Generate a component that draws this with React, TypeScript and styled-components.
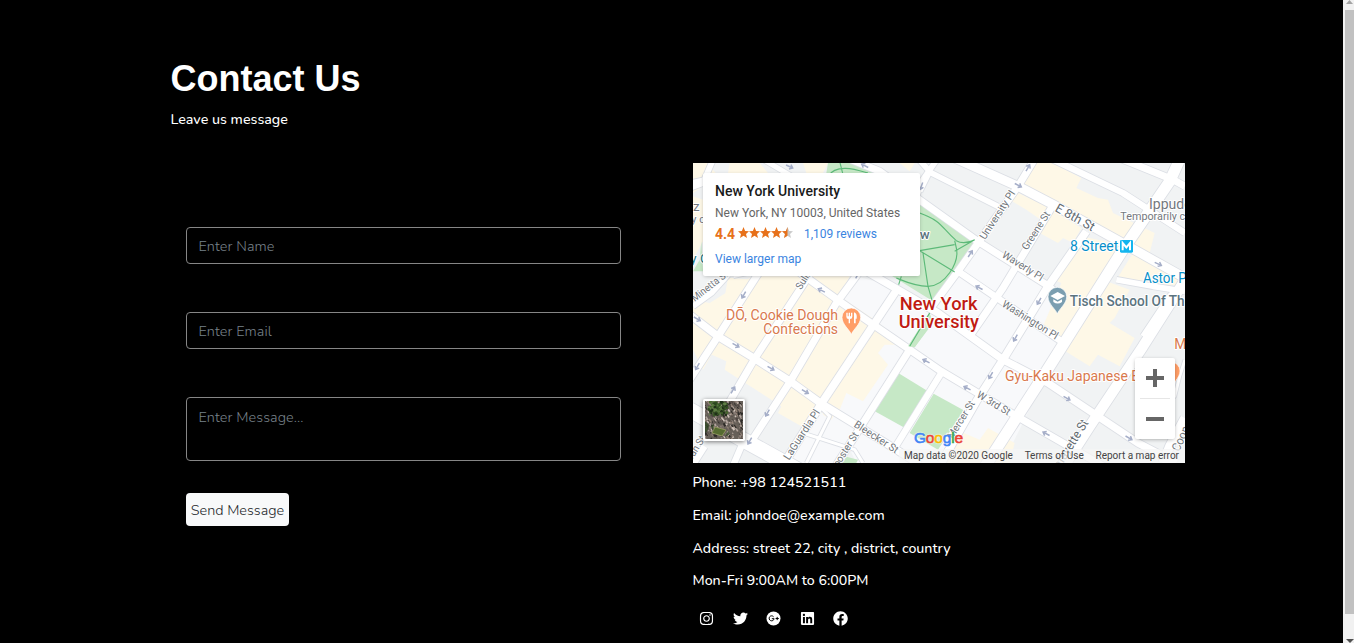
import React from "react";
import styled, { createGlobalStyle } from "styled-components";
import { FaInstagram, FaTwitter, FaLinkedin, FaFacebook } from "react-icons/fa";

const Global = createGlobalStyle`
  * { box-sizing: border-box; }
  html, body { margin: 0; background: #000; overflow: hidden; }
  body { font-family: Nunito, Lato, sans-serif; color: #fff; }
`;

const Page = styled.div`
  display: flex;
  height: 643px;
  background: #000;
`;

const Main = styled.main`
  flex: 1;
  padding: 57px 158px 0 170px;
`;

const Title = styled.h1`
  margin: 0;
  padding-left: 0.5px;
  font: bold 36px/43px "Liberation Sans", Arial, sans-serif;
`;

const Subtitle = styled.p`
  margin: 9px 0 0;
  padding-left: 0.5px;
  font-size: 14.25px;
  font-weight: 500;
  line-height: 22px;
`;

const Columns = styled.div`
  display: grid;
  grid-template-columns: 451px 492px;
  column-gap: 72px;
  margin-top: 32px;
`;

const Form = styled.form`
  display: flex;
  flex-direction: column;
  align-items: flex-start;
  padding: 64px 0 0 16px;
`;

const fieldStyles = `
  display: block;
  width: 435px;
  margin: 0 0 48px;
  padding: 6px 11.5px;
  border: 1px solid #868686;
  border-radius: 4px;
  background: transparent;
  color: #fff;
  font: 300 14.4px/22px Nunito, Lato, sans-serif;
  letter-spacing: 0.08px;
  outline: none;
  resize: none;
  &::placeholder { color: #78828a; opacity: 1; }
`;

const Input = styled.input`
  ${fieldStyles}
  height: 37px;
`;

const Message = styled.textarea`
  ${fieldStyles}
  height: 64px;
  margin-bottom: 32px;
  padding-top: 8px;
  overflow: hidden;
`;

const Send = styled.button`
  width: 103px;
  height: 33px;
  padding: 0;
  border: 0;
  border-radius: 4px;
  background: #f8f9fa;
  color: #212529;
  font: 350 14.4px/22px Nunito, Lato, sans-serif;
  white-space: nowrap;
`;

const MapFrame = styled.div`
  position: relative;
  width: 492px;
  height: 300px;
  overflow: hidden;
  font-family: Roboto, sans-serif;
`;

const MapCanvas = styled.svg`
  display: block;
  width: 492px;
  height: 300px;
`;

const PlaceCard = styled.div`
  position: absolute;
  left: 10px;
  top: 10px;
  width: 217px;
  height: 103px;
  padding: 9px 12px;
  border-radius: 2px;
  background: #fff;
  box-shadow: 0 1px 4px -1px rgba(0, 0, 0, 0.3);
  font-size: 12px;
  color: #666;
  white-space: nowrap;
`;

const PlaceName = styled.div`
  color: #1a1a1a;
  font-size: 14px;
  font-weight: 500;
  line-height: 18px;
`;

const PlaceAddress = styled.div`
  margin-top: 5px;
  line-height: 16px;
`;

const Rating = styled.div`
  display: flex;
  align-items: center;
  height: 16px;
  margin-top: 5px;
  color: #3a84df;
`;

const Score = styled.span`
  width: 23px;
  margin-top: -1px;
  color: #e7711b;
  font-size: 14px;
  font-weight: 700;
`;

const Stars = styled.svg`
  width: 55px;
  height: 12px;
  margin: -2px 11px 0 0;
`;

const LargerMap = styled.div`
  margin-top: 9px;
  line-height: 16px;
  color: #3a84df;
`;

const Thumb = styled.svg`
  position: absolute;
  left: 10px;
  top: 236px;
  width: 42px;
  height: 42px;
  border: 2px solid #fff;
  border-radius: 2px;
  box-shadow: 0 1px 4px rgba(0, 0, 0, 0.5);
`;

const Zoom = styled.div`
  position: absolute;
  left: 442px;
  top: 195px;
  width: 40px;
  height: 81px;
  border-radius: 2px;
  background: #fff;
  box-shadow: 0 1px 4px -1px rgba(0, 0, 0, 0.4);
`;

const ZoomGlyph = styled.svg`
  display: block;
`;

const Google = styled.div`
  display: flex;
  position: absolute;
  left: 221px;
  top: 265px;
  font: 500 15.5px/20px "Liberation Sans", sans-serif;
  letter-spacing: -0.2px;
  -webkit-text-stroke: 0.6px;
  text-shadow: 0 0 2px #fff, 0 0 2px #fff;
`;

const Letter = styled.span<{ $c: string }>`
  color: ${(p) => p.$c};
`;

const Legal = styled.div`
  position: absolute;
  right: 0;
  bottom: 0;
  display: flex;
  justify-content: space-between;
  width: 286px;
  height: 14px;
  padding: 0 6px 0 5px;
  background: rgba(245, 245, 245, 0.72);
  color: #444;
  font-size: 10px;
  line-height: 14px;
  white-space: nowrap;
`;

const Details = styled.div`
  display: flex;
  flex-direction: column;
  margin-left: -0.5px;
  padding-top: 9px;
`;

const Detail = styled.p`
  margin: 0 0 10.8px;
  font-size: 14.2px;
  font-weight: 500;
  line-height: 22px;
  white-space: nowrap;
`;

const Social = styled.div`
  display: flex;
  gap: 18.5px;
  margin-top: 8px;
  padding-left: 6.5px;
  font-size: 15px;
`;

const ScrollTrack = styled.div`
  display: flex;
  flex-direction: column;
  justify-content: space-between;
  width: 11px;
  background: #f1f1f1;
`;

const ScrollArrow = styled.svg`
  display: block;
  width: 11px;
  height: 10px;
`;

const ScrollThumb = styled.div`
  width: 9px;
  height: 604px;
  margin: 0 0 auto 2px;
  background: #c1c1c1;
`;

/* Map geometry is expressed at three units per pixel. */
const yellow = [
  "60,340 160,350 200,340 470,340 440,400 545,470 640,545 530,480 380,400",
  "105,345 185,350 30,620 0,560 0,470 75,515",
  "170,345 450,360 425,425 540,490 385,710 0,480 0,410 50,420",
  "0,545 75,520 385,715 350,775 325,790 255,750 265,730 95,620 100,595 0,550",
  "545,480 640,545 575,545 555,570 585,605 510,715 460,690 440,740 395,715",
  "1020,0 1080,0 1165,45 1150,75 1215,105 1245,110 1260,150 1385,210 1370,270 1310,250 1080,130 975,70",
  "955,80 1060,130 1165,195 1140,240 1110,225 1095,240 1040,210 1050,175 1000,140 950,110",
  "1165,220 1305,250 1110,535 1085,520 1050,490 1105,360 1080,350",
  "1240,355 1310,380 1265,465 1250,480 1325,525 1280,610 1215,575 1190,610 1110,560",
  "1320,270 1476,350 1476,370 1270,350",
  "0,0 45,0 75,40 0,90", "110,0 200,0 225,30 100,60", "330,0 405,0 390,30 340,30", "620,0 665,0 650,25",
  "0,100 30,110 30,235 0,290", "790,800 860,830 885,795 965,840 950,900 760,900",
  "385,735 435,740 415,770 390,755",
];

const campus = [
  "850,240 1055,365 1105,545 930,900 490,900 400,710 545,480 620,385 700,410",
  "490,340 620,375 550,480 430,410",
  "480,730 650,560 930,590 860,760 760,880 500,800",
  "385,740 490,790 440,900 280,900",
];

const parks = [
  "405,0 520,0 850,230 720,415 485,270 400,30",
  "612,628 705,685 640,797 540,742",
  "722,692 812,742 735,860 650,810",
  "645,550 710,450 720,480 665,553",
  "455,880 495,890 490,900 440,900",
  "25,235 30,325 0,325 20,290",
];

const roads: [string, number][] = [
  ["195,-20 330,60", 16],
  ["475,-10 560,25 850,232 1060,365 1110,405", 22],
  ["705,25 935,140", 18],
  ["665,-25 710,25 680,85", 18],
  ["745,-30 690,50 670,100", 18],
  ["785,-15 975,70 1090,130 1315,255 1476,345", 28],
  ["1060,-20 1290,90 1476,210", 20],
  ["1230,-35 1440,50 1476,70", 22],
  ["1030,-20 975,70 795,325 710,440", 22],
  ["1075,135 930,375 830,520", 22],
  ["1180,205 1065,370 930,590 850,715 745,900", 24],
  ["1270,350 1380,370 1476,385", 18],
  ["1476,355 1430,400 1350,520", 18],
  ["1460,-10 1430,55 1290,260 1060,625 870,920", 34],
  ["1480,345 1350,550 1190,790 1100,930", 32],
  ["1476,765 1430,850 1410,900", 28],
  ["1476,590 1460,640 1445,700 1410,725", 10],
  ["60,-10 30,60 -10,75", 18],
  ["-10,60 45,48", 16],
  ["120,335 280,300 440,415 545,488 650,560 745,625 980,765 1240,915", 22],
  ["485,305 615,380 735,450 930,590 1065,660 1200,750 1335,840 1450,900", 23],
  ["795,325 905,400 1105,535", 21],
  ["-10,455 75,520 185,587 292,655 385,722 610,860 680,905", 23],
  ["200,325 75,520 -10,650", 22],
  ["350,335 185,587 90,750", 22],
  ["500,325 430,420 292,655 165,850", 22],
  ["615,375 540,488 385,722 255,930", 24],
  ["650,560 485,820 415,930", 22],
  ["745,630 605,855", 20],
  ["-10,740 150,830 340,935", 46],
  ["145,850 115,920", 20],
  ["35,850 -10,920", 20],
  ["0,430 55,390 105,335", 18],
  ["385,735 410,760 340,900", 10],
  ["330,810 485,860 510,900", 10],
];

const paths = [
  "M440 -5 L450 35 M405 40 C430 0 490 20 525 30",
  "M680 150 C750 175 745 195 790 233 Q812 246 845 230 M845 230 L785 265",
  "M680 263 L785 245 M680 263 L785 327 M690 270 L705 370",
  "M785 233 L790 255 C800 300 755 370 705 370 C665 370 635 355 610 345",
  "M705 370 L718 415 M710 450 L650 550 M625 340 L617 365",
];

type LabelSpec = [string, number, number, number, number, number, string];
const streetLabels: LabelSpec[] = [
  ["University Pl", 876, 232, -57, 31, 168, "#70757a"],
  ["Greene St", 1002, 263, -57, 31, 130, "#70757a"],
  ["E 8th St", 1084, 143, 29, 38, 129, "#616a70"],
  ["Waverly Pl", 925, 281, 32, 32, 139, "#70757a"],
  ["Washington Pl", 925, 429, 32, 32, 191, "#70757a"],
  ["W 3rd St", 849, 701, 31, 32, 111, "#70757a"],
  ["Mercer St", 779, 829, -58, 31, 127, "#70757a"],
  ["Bleecker St", 481, 790, 33, 32, 151, "#70757a"],
  ["LaGuardia Pl", 288, 893, -57, 32, 173, "#70757a"],
  ["Wooster St", 423, 935, -58, 31, 141, "#70757a"],
  ["Sullivan St", 324, 382, -58, 31, 132, "#70757a"],
  ["Minetta St", 5, 417, -38, 31, 130, "#70757a"],
  ["Sullivan St", -32, 939, -58, 31, 132, "#70757a"],
  ["Lafayette St", 1091, 934, -58, 38, 182, "#616a70"],
  ["Cooper Sq", 1458, 868, -65, 37, 156, "#70757a"],
];

const arrows: [number, number, number][] = [
  [290, 11, 25], [515, 8, 207], [685, 70, 110], [976, 67, 27], [1005, 14, -60],
  [832, 272, -57], [858, 374, 207], [385, 382, 207], [1038, 415, 120],
  [152, 396, 120], [967, 525, 120], [13, 468, 30], [129, 547, 30],
  [234, 616, 30], [337, 686, 30], [13, 611, 120], [120, 681, -60],
  [223, 750, 120], [170, 834, 120], [699, 594, 207], [822, 675, 207],
  [893, 638, 120], [1122, 706, 30], [1059, 812, 207], [1308, 825, 30],
  [1396, 303, 25], [494, 336, -60],
];

const Pin = ({ x, y, color }: { x: number; y: number; color: string }) => (
  <path
    transform={`translate(${x} ${y})`}
    d="M0 52 C-4 38 -28 22 -28 0 A28 28 0 1 1 28 0 C28 22 5 36 0 52Z"
    fill={color}
    stroke="#fff"
    strokeWidth="2"
  />
);

const fit = "spacingAndGlyphs";

const CityMap = () => (
  <MapCanvas viewBox="0 0 1476 900">
    <rect width="1476" height="900" fill="#f1f3f4" />
    {campus.map((p) => <polygon key={p} points={p} fill="#f8f9fb" />)}
    {yellow.map((p) => <polygon key={p} points={p} fill="#fef8e7" />)}
    {parks.map((p) => <polygon key={p} points={p} fill="#c6e8c6" />)}
    <g fill="none" strokeLinejoin="round">
      {roads.map(([p, w]) => <polyline key={p} points={p} stroke="#dcdfe5" strokeWidth={w + 4} />)}
      {roads.map(([p, w]) => <polyline key={p} points={p} stroke="#fff" strokeWidth={w - 1} />)}
    </g>
    <polygon points="645,550 708,450 720,475 665,553" fill="#c6e8c6" />
    <g fill="none" stroke="#5dba79" strokeWidth="3.4">{paths.map((p) => <path key={p} d={p} />)}</g>
    <g fill="none" stroke="#a5aec8" strokeWidth="4.5">
      {arrows.map(([x, y, r]) => (
        <path key={`${x}-${y}`} transform={`translate(${x} ${y}) rotate(${r})`} d="M-12 0 H8 M1 -7 L10 0 L1 7" />
      ))}
    </g>
    <g fontFamily="Roboto, sans-serif" stroke="#fff" strokeWidth="6" paintOrder="stroke" strokeLinejoin="round">
      {streetLabels.map(([t, x, y, r, size, len, fill], i) => (
        <text key={i} transform={`translate(${x} ${y}) rotate(${r})`} fontSize={size} textLength={len} lengthAdjust={fit} fill={fill}>{t}</text>
      ))}
      <g fill="#d9794d" fontSize="42">
        <text x="99" y="472" textLength="336" lengthAdjust={fit}>DŌ, Cookie Dough</text>
        <text x="211" y="514" textLength="224" lengthAdjust={fit}>Confections</text>
        <text x="936" y="655" textLength="460" lengthAdjust={fit}>Gyu-Kaku Japanese BBQ</text>
        <text x="1444" y="559">M</text>
      </g>
      <g fill="#c01b12" fontSize="54" fontWeight="500">
        <text x="620" y="442" textLength="234" lengthAdjust={fit}>New York</text>
        <text x="617" y="495" textLength="241" lengthAdjust={fit}>University</text>
      </g>
      <g fill="#078fc9" fontSize="42">
        <text x="1131" y="265" textLength="145" lengthAdjust={fit}>8 Street</text>
        <text x="1350" y="361" textLength="205" lengthAdjust={fit}>Astor Place</text>
      </g>
      <text x="1130" y="430" fontSize="42" fontWeight="500" fill="#5b747f" textLength="454" lengthAdjust={fit}>Tisch School Of The Arts</text>
      <text x="1368" y="138" fontSize="42" fill="#74787e">Ippudo NY</text>
      <text x="1282" y="170" fontSize="33" fill="#74787e" textLength="273" lengthAdjust={fit}>Temporarily closed</text>
      <text x="680" y="228" fontSize="40" fontWeight="500" fill="#5b747f">w</text>
      <text x="0" y="144" fontSize="40" fill="#74787e">z</text>
      <text x="-5" y="179" fontSize="33" fill="#74787e">y c</text>
      <text x="-8" y="299" fontSize="40" fill="#1b7580">y C</text>
    </g>
    <rect x="1281" y="231" width="39" height="38" rx="4" fill="#13b5ef" />
    <path d="M1289 262 V240 L1300 253 L1311 240 V262" fill="none" stroke="#fff" strokeWidth="6" />
    <Pin x={1093} y={401} color="#7b9eb0" />
    <path d="M1072 399 L1094 387 L1116 399 L1094 411Z M1081 409 L1094 416 L1107 409 V417 Q1094 426 1081 417Z" fill="#fff" />
    <Pin x={475} y={463} color="#ff9e67" />
    <path d="M460 449 V461 Q460 468 467 468 V481 H471 V468 Q478 468 478 461 V449 H474 V460 H471 V449 H467 V460 H464 V449Z M483 481 V448 Q493 450 491 467 H488 V481Z" fill="#fff" />
    <Pin x={1433} y={624} color="#ff9e67" />
  </MapCanvas>
);

const star = "M5.5 0 L7.1 3.9 L11 4.2 L8 6.9 L9 11 L5.5 8.8 L2 11 L3 6.9 L0 4.2 L3.9 3.9Z";

/* Small rooftops and tree crowns, scattered by an integer hash. */
const hash = (n: number) => {
  const v = Math.sin(n * 127.1) * 43758.5453;
  return v - Math.floor(v);
};
const roofColors = ["#8b7d76", "#4f4743", "#b3a59e", "#2c2926", "#71675f", "#d0c3ba", "#968579", "#5c5650"];
const roofs = Array.from({ length: 620 }, (_, i) => ({
  x: hash(i) * 56 - 9,
  y: hash(i + 900) * 56 - 9,
  w: 0.7 + hash(i + 300) * 1.3,
  h: 1 + hash(i + 600) * 3,
  c: roofColors[Math.floor(hash(i + 50) * 8)],
}));
const treeColors = ["#2c4520", "#48682f", "#5f7e45", "#1f3018", "#3b5928"];
const trees = Array.from({ length: 150 }, (_, i) => ({
  x: 4 + hash(i + 11) * 18,
  y: 1 + hash(i + 77) * 13,
  r: 0.6 + hash(i + 5) * 1.1,
  c: treeColors[Math.floor(hash(i + 31) * 5)],
}));

const Satellite = () => (
  <Thumb viewBox="0 0 38 38">
    <rect width="38" height="38" fill="#665f58" />
    <g transform="rotate(-32 19 19)">
      {roofs.map((r, i) => <rect key={i} x={r.x} y={r.y} width={r.w} height={r.h} fill={r.c} />)}
    </g>
    {trees.map((t, i) => <circle key={i} cx={t.x} cy={t.y} r={t.r} fill={t.c} />)}
    <path d="M10 26 L21 29 L17 35 L7 32Z" fill="#566c31" stroke="#a4a66c" strokeWidth=".7" />
    <path d="M0 20 L4 24 L3 29 L0 32Z M6 25 L9 23 L8 30Z M20 36 L23 30 L25 33Z" fill="#2c4520" opacity=".75" />
  </Thumb>
);

const App = () => (
  <>
    <Global />
    <Page>
      <Main>
        <Title>Contact Us</Title>
        <Subtitle>Leave us message</Subtitle>
        <Columns>
          <Form>
            <Input placeholder="Enter Name" />
            <Input placeholder="Enter Email" />
            <Message placeholder="Enter Message..." />
            <Send type="button">Send Message</Send>
          </Form>
          <section>
            <MapFrame>
              <CityMap />
              <PlaceCard>
                <PlaceName>New York University</PlaceName>
                <PlaceAddress>New York, NY 10003, United States</PlaceAddress>
                <Rating>
                  <Score>4.4</Score>
                  <Stars viewBox="0 0 55 12">
                    {[0, 1, 2, 3, 4].map((n) => (
                      <path key={n} d={star} transform={`translate(${n * 11} 0)`} fill={n === 4 ? "#c9c9c9" : "#e7711b"} />
                    ))}
                    <path d="M5.5 0 V8.8 L2 11 L3 6.9 L0 4.2 L3.9 3.9Z" transform="translate(44 0)" fill="#e7711b" />
                  </Stars>
                  1,109 reviews
                </Rating>
                <LargerMap>View larger map</LargerMap>
              </PlaceCard>
              <Satellite />
              <Google>
                <Letter $c="#4285f4">G</Letter><Letter $c="#ea4335">o</Letter><Letter $c="#fbbc05">o</Letter>
                <Letter $c="#4285f4">g</Letter><Letter $c="#34a853">l</Letter><Letter $c="#ea4335">e</Letter>
              </Google>
              <Zoom>
                <ZoomGlyph width="40" height="81" viewBox="0 0 40 81">
                  <path d="M11 20 H29 M20 11 V29 M11 61 H29" stroke="#666" strokeWidth="4" />
                  <path d="M5 40.5 H35" stroke="#e6e6e6" />
                </ZoomGlyph>
              </Zoom>
              <Legal>
                <span>Map data ©2020 Google</span>
                <span>Terms of Use</span>
                <span>Report a map error</span>
              </Legal>
            </MapFrame>
            <Details>
              <Detail>Phone: +98 124521511</Detail>
              <Detail>Email: johndoe@example.com</Detail>
              <Detail>Address: street 22, city , district, country</Detail>
              <Detail>Mon-Fri 9:00AM to 6:00PM</Detail>
              <Social>
                <FaInstagram />
                <FaTwitter />
                <svg width="15" height="15" viewBox="0 0 15 15">
                  <circle cx="7.5" cy="7.5" r="7" fill="#fff" />
                  <path d="M7.6 5.8 A2.5 2.5 0 1 0 8.1 7.7 H5.8 M9.6 7.5 H12.8 M11.2 5.9 V9.1" fill="none" stroke="#000" strokeWidth="1" />
                </svg>
                <FaLinkedin />
                <FaFacebook />
              </Social>
            </Details>
          </section>
        </Columns>
      </Main>
      <ScrollTrack>
        <ScrollArrow viewBox="0 0 11 10"><path d="M3 4 L6.5 0 L10 4Z" fill="#a3a3a3" /></ScrollArrow>
        <ScrollThumb />
        <ScrollArrow viewBox="0 0 11 10"><path d="M3 6 H11 L7 10Z" fill="#505050" /></ScrollArrow>
      </ScrollTrack>
    </Page>
  </>
);

export default App;
